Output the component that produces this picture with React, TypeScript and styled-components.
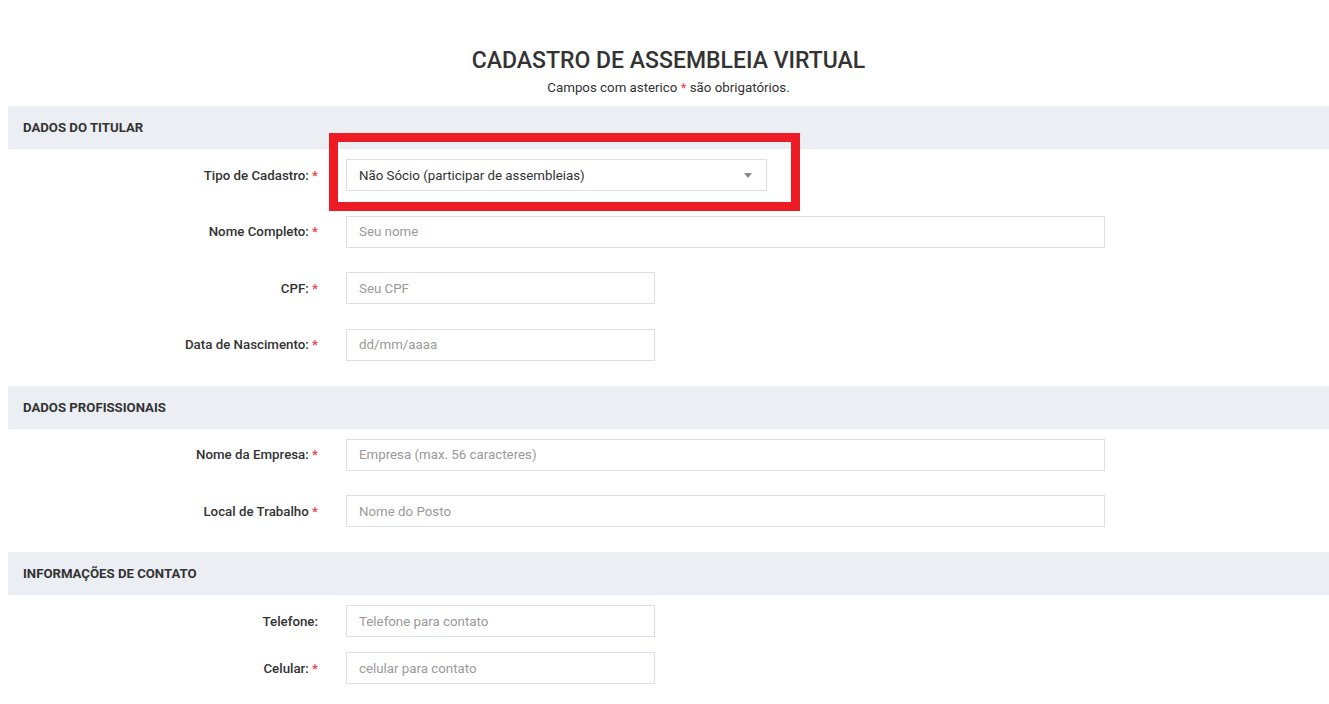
import React from "react";
import styled, { createGlobalStyle } from "styled-components";

const GlobalStyle = createGlobalStyle`
  body {
    margin: 0;
    background: #ffffff;
    font-family: Roboto, "Liberation Sans", Arial, sans-serif;
    color: #333333;
  }
`;

const Page = styled.div`
  margin-left: 8px;
  padding-top: 47px;
`;

const Heading = styled.div`
  text-align: center;
  margin-bottom: 10px;
`;

const Title = styled.h1`
  margin: 0;
  font-size: 23px;
  line-height: 27px;
  font-weight: 500;
  color: #333333;
`;

const Subtitle = styled.p`
  margin: 5px 0 0;
  font-size: 13.3px;
  line-height: 17px;
  color: #333333;
`;

const Star = styled.span`
  color: #e8424a;
`;

const SectionHeader = styled.div`
  height: 43px;
  background: #ebeef3;
  display: flex;
  align-items: center;
  padding-left: 15px;
  font-size: 13.2px;
  font-weight: 700;
  color: #333333;
`;

const SectionBody = styled.div<{ $gap: number }>`
  display: flex;
  flex-direction: column;
  gap: ${(p) => p.$gap}px;
  padding: 10px 0 25px;
`;

const Row = styled.div`
  display: grid;
  grid-template-columns: 310px 1fr;
  column-gap: 28px;
  align-items: center;
`;

const Label = styled.label`
  text-align: right;
  font-size: 13.3px;
  font-weight: 500;
  color: #333333;
`;

const Field = styled.div<{ $width: number }>`
  position: relative;
  width: ${(p) => p.$width}px;
`;

const TextInput = styled.input`
  box-sizing: border-box;
  width: 100%;
  height: 32px;
  border: 1px solid #dcdfe6;
  border-radius: 0;
  padding: 0 12px;
  font-family: inherit;
  font-size: 13.3px;
  color: #333333;
  outline: none;
  &::placeholder {
    color: #9a9a9a;
  }
`;

const SelectBox = styled.div`
  box-sizing: border-box;
  height: 32px;
  border: 1px solid #dcdfe6;
  padding: 0 12px;
  display: flex;
  align-items: center;
  justify-content: space-between;
  font-size: 13.3px;
  color: #333333;
`;

const Caret = styled.span`
  width: 0;
  height: 0;
  border-left: 4px solid transparent;
  border-right: 4px solid transparent;
  border-top: 5px solid #8a8a8a;
  margin-right: 2px;
`;

const Highlight = styled.div`
  position: absolute;
  left: -17px;
  top: -26px;
  right: -33px;
  bottom: -20px;
  border: 9px solid #ed1c24;
  pointer-events: none;
`;

type FieldDef = {
  label: string;
  placeholder: string;
  width: number;
  required?: boolean;
};

const FormRow = ({ label, placeholder, width, required = true }: FieldDef) => (
  <Row>
    <Label>
      {label}
      {required && <Star> *</Star>}
    </Label>
    <Field $width={width}>
      <TextInput placeholder={placeholder} />
    </Field>
  </Row>
);

const titular: FieldDef[] = [
  { label: "Nome Completo:", placeholder: "Seu nome", width: 759 },
  { label: "CPF:", placeholder: "Seu CPF", width: 309 },
  { label: "Data de Nascimento:", placeholder: "dd/mm/aaaa", width: 309 },
];

const profissionais: FieldDef[] = [
  { label: "Nome da Empresa:", placeholder: "Empresa (max. 56 caracteres)", width: 759 },
  { label: "Local de Trabalho", placeholder: "Nome do Posto", width: 759 },
];

const contato: FieldDef[] = [
  { label: "Telefone:", placeholder: "Telefone para contato", width: 309, required: false },
  { label: "Celular:", placeholder: "celular para contato", width: 309 },
];

const App = () => (
  <>
    <GlobalStyle />
    <Page>
      <Heading>
        <Title>CADASTRO DE ASSEMBLEIA VIRTUAL</Title>
        <Subtitle>
          Campos com asterico <Star>*</Star> são obrigatórios.
        </Subtitle>
      </Heading>

      <SectionHeader>DADOS DO TITULAR</SectionHeader>
      <SectionBody $gap={24.5}>
        <Row>
          <Label>
            Tipo de Cadastro:<Star> *</Star>
          </Label>
          <Field $width={421}>
            <SelectBox>
              Não Sócio (participar de assembleias)
              <Caret />
            </SelectBox>
            <Highlight />
          </Field>
        </Row>
        {titular.map((f) => (
          <FormRow key={f.label} {...f} />
        ))}
      </SectionBody>

      <SectionHeader>DADOS PROFISSIONAIS</SectionHeader>
      <SectionBody $gap={24.5}>
        {profissionais.map((f) => (
          <FormRow key={f.label} {...f} />
        ))}
      </SectionBody>

      <SectionHeader>INFORMAÇÕES DE CONTATO</SectionHeader>
      <SectionBody $gap={15}>
        {contato.map((f) => (
          <FormRow key={f.label} {...f} />
        ))}
      </SectionBody>
    </Page>
  </>
);

export default App;
